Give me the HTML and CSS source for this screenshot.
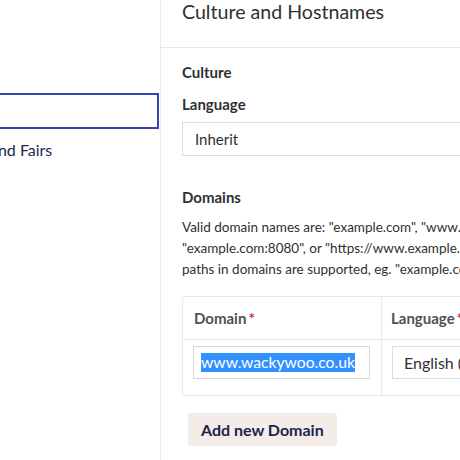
FILE: index.html
```html
<!DOCTYPE html>
<html>
<head>
<meta charset="utf-8">
<link rel="stylesheet" href="styles.css">
</head>
<body>
<div class="app">
  <aside class="sidebar">
    <ul class="tree">
      <li class="tree-item focused"><span>Home Page</span></li>
      <li class="tree-item"><span>Shows and Fairs</span></li>
      <li class="tree-item spacer"></li>
      <li class="tree-item far"><span>Contact Details</span></li>
    </ul>
  </aside>
  <main class="panel">
    <header class="panel-header">
      <h1 class="panel-title">Culture and Hostnames</h1>
    </header>
    <section class="panel-body">
      <h2 class="group-title">Culture</h2>
      <label class="field-label">Language</label>
      <div class="select wide">Inherit</div>

      <h2 class="group-title domains">Domains</h2>
      <p class="help">Valid domain names are: "example.com", "www.example.com",<br>"example.com:8080", or "https://www.example.com/". Furthermore also one-level<br>paths in domains are supported, eg. "example.com/en" or "/en".</p>

      <div class="table">
        <div class="row head">
          <div class="cell c1">Domain <span class="req">*</span></div>
          <div class="cell c2">Language <span class="req">*</span></div>
        </div>
        <div class="row body">
          <div class="cell c1"><div class="input"><span class="sel">www.wackywoo.co.uk</span></div></div>
          <div class="cell c2"><div class="select lang">English (United Kingdom)</div></div>
        </div>
      </div>

      <button class="btn">Add new Domain</button>
    </section>
  </main>
</div>
</body>
</html>
```

FILE: styles.css
```css
html, body {
  margin: 0;
  padding: 0;
  background: #ffffff;
  font-family: Lato, "Open Sans", sans-serif;
  color: #303033;
}
.app {
  display: flex;
  width: 460px;
  height: 460px;
  overflow: hidden;
}
.sidebar {
  flex: 0 0 160px;
  border-right: 1px solid #e9e9eb;
  overflow: hidden;
}
.tree {
  list-style: none;
  margin: 93px 0 0 0;
  padding: 0;
}
.tree-item {
  height: 36px;
  display: flex;
  align-items: center;
  font-size: 16px;
  color: #1b264f;
  white-space: nowrap;
  box-sizing: border-box;
  padding-top: 4px;
}
.tree-item span {
  margin-left: -60px;
}
.tree-item.focused {
  border: 2px solid #3544b1;
  margin-left: -4px;
  width: 163px;
  padding-top: 0;
}
.tree-item.focused span {
  visibility: hidden;
}
.tree-item.spacer {
  height: 155px;
}
.tree-item.far span {
  margin-left: -113px;
}
.panel {
  flex: 0 0 auto;
  width: 700px;
}
.panel-header {
  height: 47px;
  border-bottom: 1px solid #e9e9eb;
  padding-left: 21px;
}
.panel-title {
  margin: 0;
  font-size: 19.6px;
  font-weight: 400;
  line-height: 24px;
  color: #303033;
}
.panel-body {
  padding: 14px 0 0 21px;
}
.group-title {
  margin: 0;
  font-size: 15px;
  font-weight: 700;
  line-height: 20px;
  color: #303033;
}
.field-label {
  display: block;
  margin-top: 12px;
  font-size: 15px;
  font-weight: 700;
  line-height: 20px;
  color: #303033;
}
.select {
  box-sizing: border-box;
  height: 34px;
  border: 1px solid #dcdbdd;
  padding: 0 12px;
  display: flex;
  align-items: center;
  font-size: 15px;
  color: #303033;
  white-space: nowrap;
}
.select.wide {
  margin-top: 8px;
  width: 600px;
}
.group-title.domains {
  margin-top: 31px;
}
.help {
  margin: 10px 0 0 0;
  font-size: 13.5px;
  line-height: 21px;
  white-space: nowrap;
  color: #303033;
}
.table {
  margin-top: 16px;
  border: 1px solid #e9e9eb;
  border-radius: 3px;
  width: 600px;
}
.row {
  display: flex;
}
.row.head {
  height: 42px;
  border-bottom: 1px solid #e9e9eb;
}
.row.body {
  height: 55px;
}
.cell {
  box-sizing: border-box;
}
.cell.c1 {
  flex: 0 0 199px;
  border-right: 1px solid #e9e9eb;
}
.cell.c2 {
  flex: 1;
}
.row.head .cell {
  display: flex;
  align-items: center;
  font-size: 15px;
  font-weight: 700;
  color: #515054;
}
.row.head .cell.c1 {
  padding-left: 11px;
}
.row.head .cell.c2 {
  padding-left: 9px;
}
.req {
  color: #d42054;
  margin-left: 2px;
}
.row.body .cell {
  padding-top: 6px;
  padding-left: 10px;
}
.input {
  box-sizing: border-box;
  width: 177px;
  height: 33px;
  border: 1px solid #d8d7d9;
  padding: 0 7px;
  display: flex;
  align-items: center;
  font-size: 15.7px;
  color: #ffffff;
}
.sel {
  background: #3390ff;
  line-height: 19px;
}
.select.lang {
  height: 33px;
  width: 250px;
  font-size: 16px;
  padding-left: 11px;
}
.btn {
  margin: 17px 0 0 6px;
  height: 33px;
  padding: 0 13px;
  border: none;
  border-radius: 3px;
  background: #f3ece8;
  color: #1b264f;
  font-family: Lato, sans-serif;
  font-size: 16px;
  font-weight: 700;
}
```
